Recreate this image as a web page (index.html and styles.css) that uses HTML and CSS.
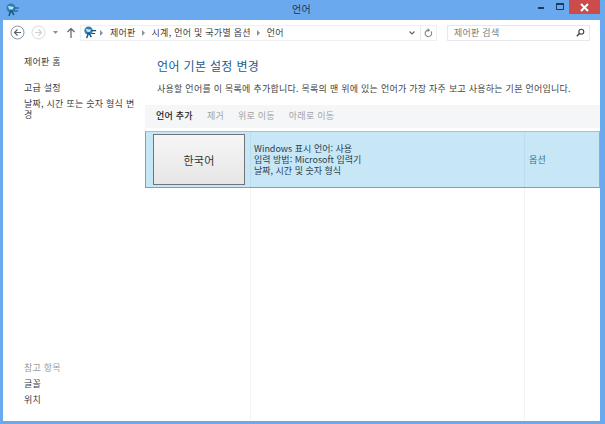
FILE: index.html
```html
<!DOCTYPE html>
<html lang="ko">
<head>
<meta charset="utf-8">
<title>언어</title>
<link rel="stylesheet" href="styles.css">
</head>
<body>
<div class="window">
  <header class="titlebar">
    <svg class="app-icon" width="16" height="16" viewBox="0 0 16 16"><circle cx="7" cy="6" r="4.5" fill="#2f7fb5"/><path d="M4 4l6 1-2 3-3-1z" fill="#bfe3f2"/><path d="M7 8l-2 6M7 8l3 5" stroke="#1d5a86" stroke-width="1.6" fill="none"/><path d="M10 6h5M10 9h4" stroke="#14507c" stroke-width="1.2"/></svg>
    <div class="title">언어</div>
    <div class="controls">
      <div class="ctl"><span class="min"></span></div>
      <div class="ctl"><span class="max"></span></div>
      <div class="close"><svg width="9" height="9" viewBox="0 0 9 9"><path d="M1 1l7 7M8 1l-7 7" stroke="#fff" stroke-width="2"/></svg></div>
    </div>
  </header>
  <div class="client">
    <nav class="navbar">
      <div class="navbtns">
        <svg width="15" height="15" viewBox="0 0 15 15"><circle cx="7.5" cy="7.5" r="6.5" fill="#fff" stroke="#8d959e"/><path d="M11 7.5H4.500M7.500 4.500l-3 3 3 3" stroke="#5a626c" stroke-width="1.200" fill="none"/></svg>
        <svg width="15" height="15" viewBox="0 0 15 15"><circle cx="7.5" cy="7.5" r="6.500" fill="#fff" stroke="#d8dbde"/><path d="M4 7.500h6.500M7.500 4.500l3 3-3 3" stroke="#cdd0d4" stroke-width="1.200" fill="none"/></svg>
        <svg class="drop" width="5" height="3" viewBox="0 0 5 3"><path d="M0 0h5L2.500 3z" fill="#8a9098"/></svg>
        <svg class="up" width="10" height="11" viewBox="0 0 10 11"><path d="M5 11V1.500M1.500 5l3.500-3.500L8.500 5" stroke="#59616b" stroke-width="1.200" fill="none"/></svg>
      </div>
      <div class="address">
        <svg class="addr-icon" width="15" height="15" viewBox="0 0 16 16"><circle cx="7" cy="6" r="4.500" fill="#2f7fb5"/><path d="M4 4l6 1-2 3-3-1z" fill="#bfe3f2"/><path d="M7 8l-2 6M7 8l3 5" stroke="#1d5a86" stroke-width="1.600" fill="none"/><path d="M10 6h5M10 9h4" stroke="#14507c" stroke-width="1.200"/></svg>
        <span class="sep"></span><span>제어판</span><span class="sep"></span><span>시계, 언어 및 국가별 옵션</span><span class="sep"></span><span>언어</span>
        <svg class="chev" width="6" height="4" viewBox="0 0 6 4"><path d="M.5.500L3 3 5.500.500" stroke="#666" stroke-width="1.100" fill="none"/></svg>
        <div class="refresh"><svg width="9" height="10" viewBox="0 0 11 12"><path d="M8.500 4a4 4 0 1 1-3-1.500" stroke="#7b838c" stroke-width="1.300" fill="none"/><path d="M4.500 0v5l3-2.500z" fill="#7b838c"/></svg></div>
      </div>
      <div class="search">
        <span>제어판 검색</span>
        <svg width="9" height="9" viewBox="0 0 11 11"><circle cx="6.500" cy="4.500" r="3" fill="none" stroke="#444" stroke-width="1.400"/><path d="M4.500 6.500L1 10" stroke="#444" stroke-width="1.800"/></svg>
      </div>
    </nav>
    <div class="main">
      <aside class="sidebar">
        <div class="side-top">
          <a class="home">제어판 홈</a>
          <a>고급 설정</a>
          <a>날짜, 시간 또는 숫자 형식 변경</a>
        </div>
        <div class="side-bottom">
          <div class="muted">참고 항목</div>
          <a>글꼴</a>
          <a>위치</a>
        </div>
      </aside>
      <section class="content">
        <h1>언어 기본 설정 변경</h1>
        <p class="desc">사용할 언어를 이 목록에 추가합니다. 목록의 맨 위에 있는 언어가 가장 자주 보고 사용하는 기본 언어입니다.</p>
        <div class="toolbar">
          <span class="on">언어 추가</span><span>제거</span><span>위로 이동</span><span>아래로 이동</span>
        </div>
        <div class="list">
          <div class="row">
            <div class="cell-lang"><div class="lang">한국어</div></div>
            <div class="cell-info">
              <div>Windows 표시 언어: 사용</div>
              <div>입력 방법: Microsoft 입력기</div>
              <div>날짜, 시간 및 숫자 형식</div>
            </div>
            <div class="cell-opt">옵션</div>
          </div>
          <div class="rest"><div></div><div></div><div></div></div>
        </div>
      </section>
    </div>
  </div>
</div>
</body>
</html>
```
FILE: styles.css
```css
* { box-sizing: border-box; }
html, body { margin: 0; height: 100%; }
body {
  font-family: "Noto Sans CJK KR", "Liberation Sans", sans-serif;
  font-size: 9px;
  letter-spacing: .25px;
  color: #3a3a3a;
  overflow: hidden;
}
.window {
  width: 605px;
  height: 424px;
  background: #6aa9ee;
  display: flex;
  flex-direction: column;
  padding: 0 5px 3px 3px;
}
.titlebar {
  height: 20px;
  flex: none;
  position: relative;
  display: flex;
  align-items: flex-start;
}
.app-icon { margin: 2px 0 0 1px; }
.title {
  position: absolute;
  left: 0;
  right: 0;
  top: 1px;
  text-align: center;
  font-size: 10px;
  line-height: 15px;
  color: #1d3550;
}
.controls {
  margin-left: auto;
  display: flex;
  align-items: flex-start;
}
.ctl {
  width: 19px;
  height: 13px;
  display: flex;
  align-items: center;
  justify-content: center;
}
.min { width: 6px; height: 2px; background: #1c3a5c; margin-top: 3px; }
.max { width: 8px; height: 7px; border: 1px solid #1c3a5c; border-top-width: 2px; }
.close {
  width: 31px;
  height: 14px;
  background: #cc4b4b;
  display: flex;
  align-items: center;
  justify-content: center;
}
.client {
  flex: 1;
  min-height: 0;
  background: #fff;
  display: flex;
  flex-direction: column;
}
.navbar {
  height: 24px;
  flex: none;
  display: flex;
  align-items: center;
  padding: 1px 0 0 7px;
}
.navbtns {
  display: flex;
  align-items: center;
  gap: 6px;
  width: 70px;
}
.drop { margin-left: 1px; }
.up { margin-left: 2px; }
.address {
  width: 357px;
  height: 16px;
  display: flex;
  align-items: center;
  border: 1px solid #eef0f2;
  padding-left: 1px;
  color: #3c3c3c;
  white-space: nowrap;
}
.addr-icon { margin-right: -3px; }
.sep {
  width: 3px;
  height: 0;
  border-left: 3px solid #8b9096;
  border-top: 3px solid transparent;
  border-bottom: 3px solid transparent;
  margin: 0 7px 0 6px;
}
.chev { margin-left: auto; margin-right: 5px; }
.refresh {
  width: 16px;
  height: 100%;
  border-left: 1px solid #e8eaec;
  display: flex;
  align-items: center;
  justify-content: center;
}
.search {
  width: 143px;
  height: 16px;
  margin-left: 10px;
  border: 1px solid #e6e8eb;
  display: flex;
  align-items: center;
  justify-content: space-between;
  padding: 0 4px 0 6px;
  color: #7d7d7d;
}
.main {
  flex: 1;
  min-height: 0;
  display: flex;
}
.sidebar {
  width: 142px;
  flex: none;
  padding: 12px 6px 0 21px;
  display: flex;
  flex-direction: column;
  justify-content: space-between;
  line-height: 11px;
}
.sidebar a { display: block; color: #3a4046; }
.side-top a + a { margin-top: 5px; }
.side-top .home { margin-bottom: 15px; }
.side-bottom { padding-bottom: 16px; }
.side-bottom a { margin-top: 5px; }
.muted { color: #9a9a9a; }
.content {
  flex: 1;
  min-width: 0;
  display: flex;
  flex-direction: column;
}
h1 {
  margin: 14px 0 0 12px;
  font-size: 12px;
  font-weight: 400;
  line-height: 16px;
  color: #1d5b8e;
  letter-spacing: .35px;
}
.desc {
  margin: 9px 0 0 12px;
  line-height: 12px;
  color: #444;
  white-space: nowrap;
}
.toolbar {
  margin: 10px 0 0;
  height: 23px;
  padding: 0 0 2px 11px;
  background: #f5f6f7;
  display: flex;
  align-items: center;
  gap: 14px;
  color: #a3a3a3;
}
.toolbar .on { color: #222; font-weight: 500; }
.list {
  flex: 1;
  min-height: 0;
  display: flex;
  flex-direction: column;
  margin-top: 3px;
}
.row {
  height: 57px;
  flex: none;
  display: grid;
  grid-template-columns: 104px 274px 1fr;
  background: #c8e7f6;
  border: 1px solid #68a8c8;
  border-top-color: #9dc4da;
  border-right-color: #7fb6d4;
}
.cell-lang { padding: 2px 0 0 7px; }
.lang {
  width: 92px;
  height: 51px;
  background: linear-gradient(#f6f6f6, #e6e6e6);
  border: 1px solid #6f7478;
  display: flex;
  align-items: center;
  justify-content: center;
  font-size: 11px;
  color: #333;
}
.cell-info {
  border-left: 1px solid #bcdcec;
  padding: 11px 0 0 3px;
  line-height: 11px;
  letter-spacing: 0;
  color: #2c3e4a;
}
.cell-opt {
  border-left: 1px solid #bcdcec;
  padding-left: 4px;
  display: flex;
  align-items: center;
  color: #1d7a99;
}
.rest {
  flex: 1;
  display: grid;
  grid-template-columns: 104px 274px 1fr;
  padding-left: 1px;
}
.rest div + div { border-left: 1px solid #f2f3f4; }
```
